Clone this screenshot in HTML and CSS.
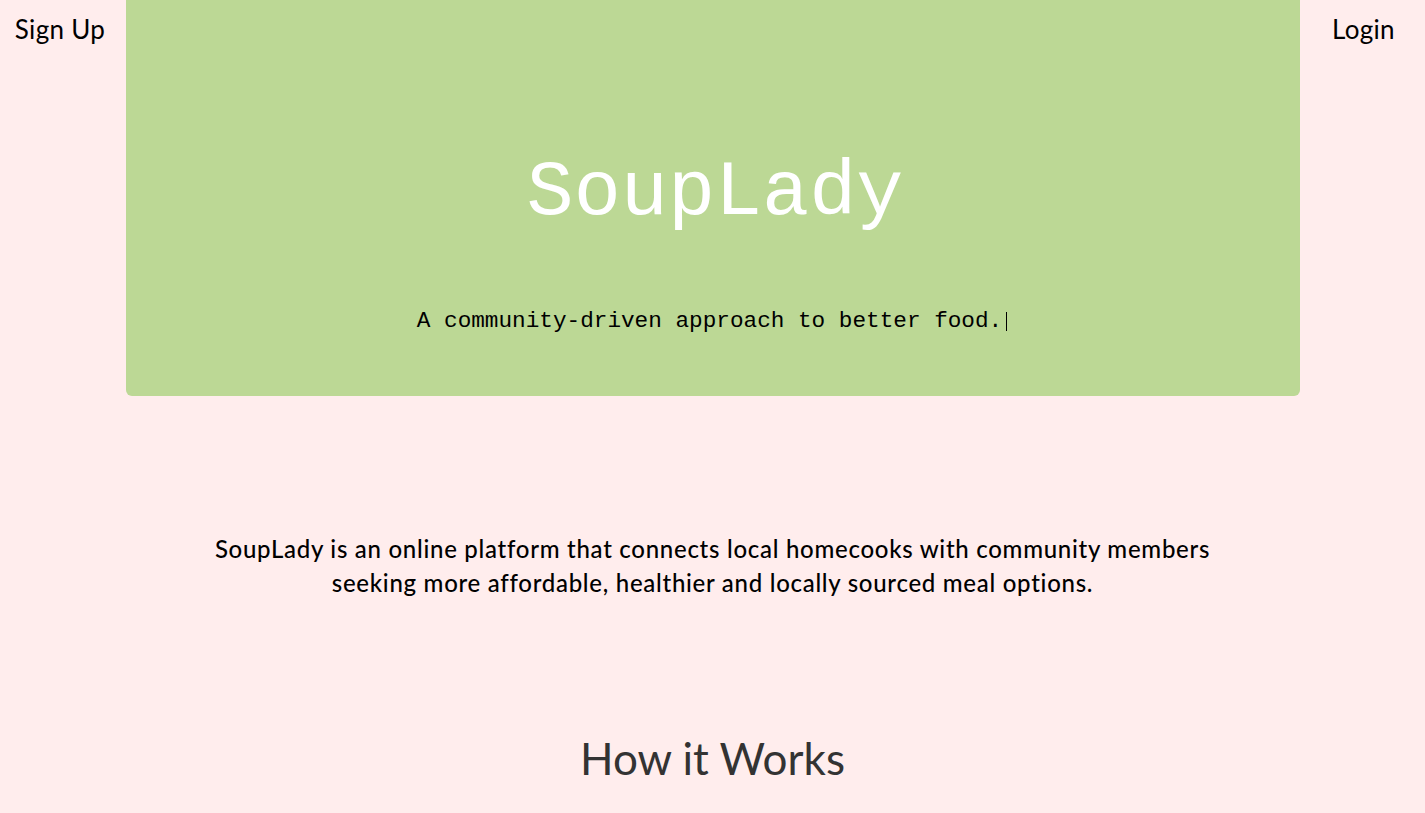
FILE: index.html
```html
<!DOCTYPE html>
<html lang="en">
<head>
<meta charset="utf-8">
<title>SoupLady</title>
<link rel="stylesheet" href="styles.css">
</head>
<body>
<header class="top">
  <a class="nav-link nav-left" href="#">Sign Up</a>
  <section class="hero">
    <h1 class="hero-title">SoupLady</h1>
    <p class="hero-tagline">A community-driven approach to better food.<span class="cursor"></span></p>
  </section>
  <a class="nav-link nav-right" href="#">Login</a>
</header>
<main>
  <p class="about">SoupLady is an online platform that connects local homecooks with community members<br>seeking more affordable, healthier and locally sourced meal options.</p>
  <h2 class="section-title">How it Works</h2>
</main>
</body>
</html>
```
FILE: styles.css
```css
html, body {
  margin: 0;
  padding: 0;
}
body {
  background: #ffeded;
  font-family: "Lato", "Noto Sans", sans-serif;
  color: #000;
  overflow: hidden;
}
.top {
  display: flex;
  align-items: flex-start;
}
.nav-link {
  color: #000;
  text-decoration: none;
  font-size: 26px;
  line-height: 30px;
  letter-spacing: 0.3px;
  padding-top: 14px;
  text-align: center;
}
.nav-left {
  width: 126px;
  flex: 0 0 126px;
  padding-right: 6px;
  box-sizing: border-box;
}
.nav-right {
  width: 125px;
  flex: 0 0 125px;
  padding-left: 2px;
  box-sizing: border-box;
}
.hero {
  flex: 1;
  height: 396px;
  background: #bcd895;
  border-radius: 0 0 6px 6px;
  display: flex;
  flex-direction: column;
  align-items: center;
  box-sizing: border-box;
  padding-top: 154px;
}
.hero-title {
  margin: 0;
  font-family: "Liberation Mono", "Courier New", monospace;
  font-weight: normal;
  font-size: 78.5px;
  line-height: 80px;
  color: #fff;
  padding-left: 4px;
}
.hero-tagline {
  margin: 74px 0 0 0;
  font-family: "Liberation Mono", "Courier New", monospace;
  font-size: 22.7px;
  line-height: 26px;
  color: #000;
  display: flex;
  align-items: center;
  padding-right: 2px;
}
.cursor {
  display: inline-block;
  width: 1px;
  height: 19px;
  background: #000;
  margin-left: 4px;
  margin-top: 1px;
}
main {
  display: flex;
  flex-direction: column;
  align-items: center;
}
.about {
  margin: 136px 0 0 0;
  text-align: center;
  font-size: 24px;
  line-height: 34px;
  letter-spacing: 0.72px;
  font-weight: 500;
}
.section-title {
  margin: 132px 0 0 0;
  font-size: 44px;
  line-height: 52px;
  font-weight: normal;
  color: #333;
}
```
